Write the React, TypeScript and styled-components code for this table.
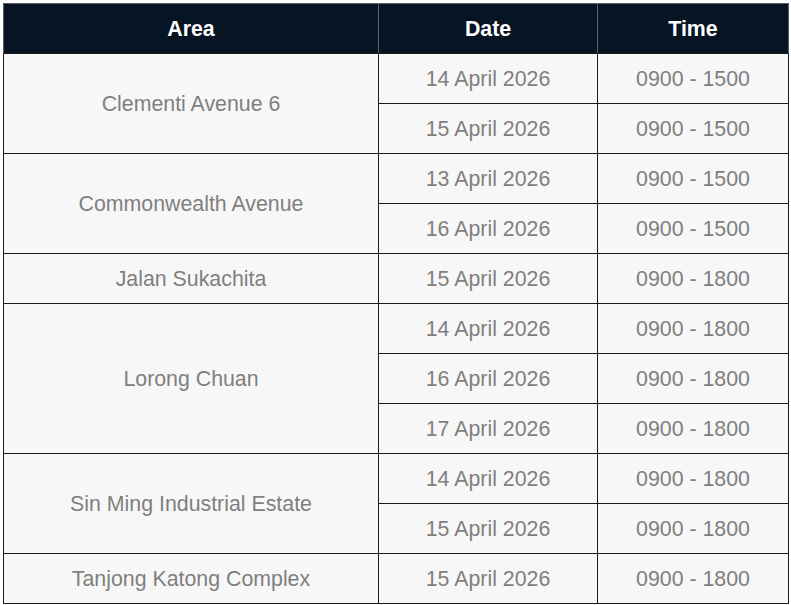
import React from "react";
import styled, { createGlobalStyle } from "styled-components";

const Global = createGlobalStyle`
  html, body { margin: 0; padding: 0; background: #ffffff; }
  body { font-family: "Liberation Sans", Arial, sans-serif; }
`;

const Wrap = styled.div`
  padding: 3px;
`;

const Table = styled.table`
  border-collapse: collapse;
  table-layout: fixed;
  width: 785px;
  border: 1px solid #1a1a1a;
`;

const HeadCell = styled.th`
  height: 48px;
  padding: 1px 0 0;
  background: #061423;
  color: #ffffff;
  font-weight: bold;
  font-size: 21.33px;
  text-align: center;
  vertical-align: middle;
  border: 1px solid #5a5f66;
  border-bottom: 1px solid #1a1a1a;
`;

const Cell = styled.td`
  height: 48px;
  padding: 1px 0 0;
  background: #f7f7f7;
  color: #7f7f7f;
  font-size: 21.33px;
  text-align: center;
  vertical-align: middle;
  border: 1px solid #1a1a1a;
`;

type Group = { area: string; rows: { date: string; time: string }[] };

const data: Group[] = [
  {
    area: "Clementi Avenue 6",
    rows: [
      { date: "14 April 2026", time: "0900 - 1500" },
      { date: "15 April 2026", time: "0900 - 1500" },
    ],
  },
  {
    area: "Commonwealth Avenue",
    rows: [
      { date: "13 April 2026", time: "0900 - 1500" },
      { date: "16 April 2026", time: "0900 - 1500" },
    ],
  },
  {
    area: "Jalan Sukachita",
    rows: [{ date: "15 April 2026", time: "0900 - 1800" }],
  },
  {
    area: "Lorong Chuan",
    rows: [
      { date: "14 April 2026", time: "0900 - 1800" },
      { date: "16 April 2026", time: "0900 - 1800" },
      { date: "17 April 2026", time: "0900 - 1800" },
    ],
  },
  {
    area: "Sin Ming Industrial Estate",
    rows: [
      { date: "14 April 2026", time: "0900 - 1800" },
      { date: "15 April 2026", time: "0900 - 1800" },
    ],
  },
  {
    area: "Tanjong Katong Complex",
    rows: [{ date: "15 April 2026", time: "0900 - 1800" }],
  },
];

export default function App() {
  return (
    <Wrap>
      <Global />
      <Table>
        <colgroup>
          <col style={{ width: 375 }} />
          <col style={{ width: 219 }} />
          <col style={{ width: 191 }} />
        </colgroup>
        <thead>
          <tr>
            <HeadCell>Area</HeadCell>
            <HeadCell>Date</HeadCell>
            <HeadCell>Time</HeadCell>
          </tr>
        </thead>
        <tbody>
          {data.map((g) =>
            g.rows.map((r, i) => (
              <tr key={g.area + i}>
                {i === 0 && <Cell rowSpan={g.rows.length}>{g.area}</Cell>}
                <Cell>{r.date}</Cell>
                <Cell>{r.time}</Cell>
              </tr>
            ))
          )}
        </tbody>
      </Table>
    </Wrap>
  );
}
